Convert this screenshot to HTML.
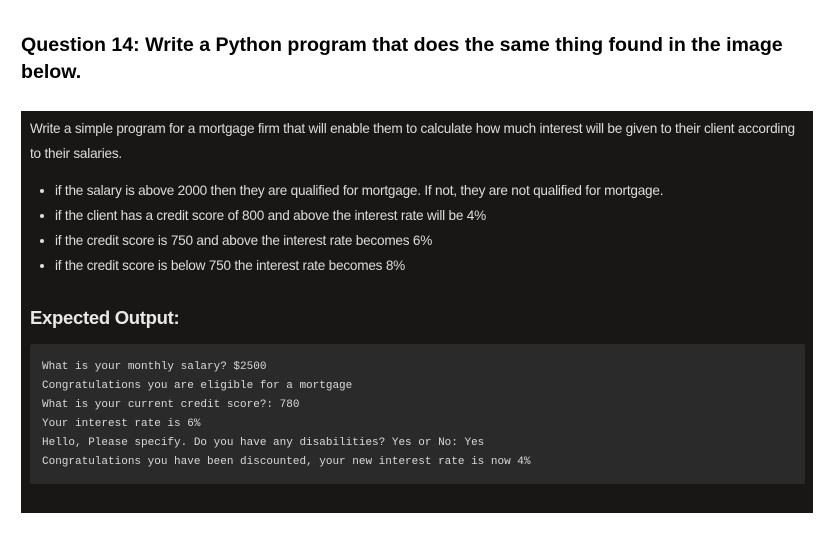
<!DOCTYPE html>
<html><head><meta charset="utf-8"><style>
body{margin:0;background:#fff;width:839px;height:541px;overflow:hidden;font-family:"Liberation Sans",Arial,sans-serif;}
h1{position:absolute;left:21px;top:32px;margin:0;font-size:19.6px;font-weight:bold;line-height:27px;color:#000;width:820px;white-space:nowrap;}
.box{position:absolute;left:21px;top:111px;width:792px;height:402px;background:#181716;color:#dcdcdc;}
.p{position:absolute;left:9px;top:5px;width:775px;font-size:13.6px;line-height:25px;letter-spacing:-0.22px;}
ul{position:absolute;left:0;top:67px;margin:0;padding-left:34px;font-size:13.6px;line-height:25px;letter-spacing:-0.22px;}
h2{position:absolute;left:9px;top:196px;margin:0;font-size:18.5px;font-weight:bold;color:#e8e8e8;letter-spacing:-0.3px;}
.code{position:absolute;left:9px;top:233px;width:775px;height:140px;background:#2a2a2a;border-radius:2px;}
pre{margin:0;position:absolute;left:12px;top:14px;font-family:"Liberation Mono",monospace;font-size:11px;line-height:19px;color:#d8d8d8;}
</style></head><body>
<h1>Question 14: Write a Python program that does the same thing found in the image<br>below.</h1>
<div class="box">
<div class="p">Write a simple program for a mortgage firm that will enable them to calculate how much interest will be given to their client according to their salaries.</div>
<ul>
<li>if the salary is above 2000 then they are qualified for mortgage. If not, they are not qualified for mortgage.</li>
<li>if the client has a credit score of 800 and above the interest rate will be 4%</li>
<li>if the credit score is 750 and above the interest rate becomes 6%</li>
<li>if the credit score is below 750 the interest rate becomes 8%</li>
</ul>
<h2>Expected Output:</h2>
<div class="code"><pre>What is your monthly salary? $2500
Congratulations you are eligible for a mortgage
What is your current credit score?: 780
Your interest rate is 6%
Hello, Please specify. Do you have any disabilities? Yes or No: Yes
Congratulations you have been discounted, your new interest rate is now 4%</pre></div>
</div>
</body></html>
